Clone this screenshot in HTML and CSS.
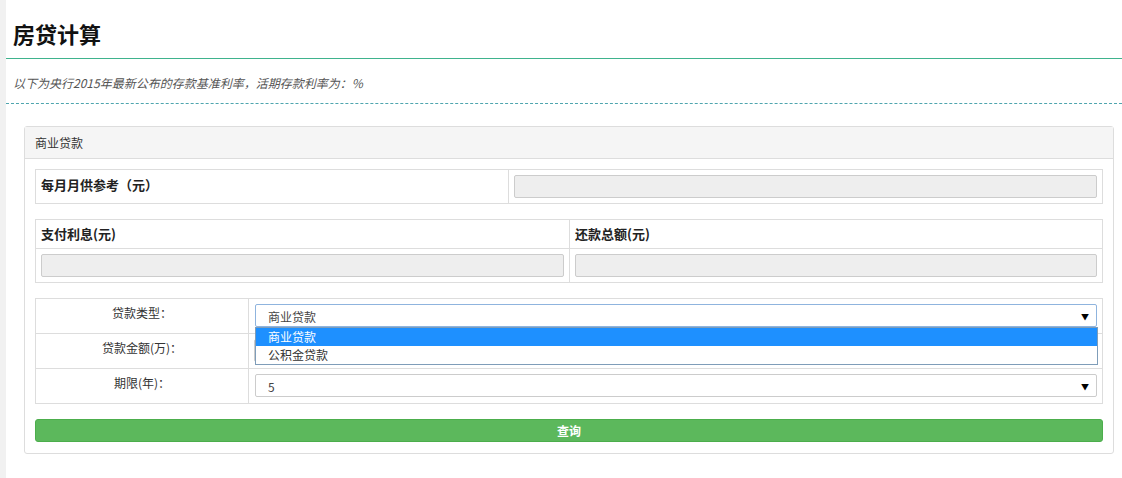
FILE: index.html
```html
<!DOCTYPE html>
<html lang="zh-CN">
<head>
<meta charset="utf-8">
<title>房贷计算</title>
<link rel="stylesheet" href="styles.css">
</head>
<body>
<div class="page">
  <h2 class="title">房贷计算</h2>
  <p class="note">以下为央行2015年最新公布的存款基准利率，活期存款利率为：%</p>
  <div class="panel">
    <div class="panel-head">商业贷款</div>
    <div class="panel-body">
      <div class="grid g1">
        <div class="cell th">每月月供参考（元）</div>
        <div class="cell bl"><div class="field ro"></div></div>
      </div>
      <div class="grid g2">
        <div class="cell th hd">支付利息(元)</div>
        <div class="cell th hd bl">还款总额(元)</div>
        <div class="cell"><div class="field ro"></div></div>
        <div class="cell bl"><div class="field ro"></div></div>
      </div>
      <div class="grid g3">
        <div class="cell lbl">贷款类型：</div>
        <div class="cell bl sel-cell">
          <div class="select focus"><span>商业贷款</span><span class="arrow">▼</span></div>
          <div class="dropdown">
            <div class="opt active">商业贷款</div>
            <div class="opt">公积金贷款</div>
          </div>
        </div>
        <div class="cell lbl bt">贷款金额(万)：</div>
        <div class="cell bl bt"><div class="field"></div></div>
        <div class="cell lbl bt">期限(年)：</div>
        <div class="cell bl bt"><div class="select"><span>5</span><span class="arrow">▼</span></div></div>
      </div>
      <div class="btn">查询</div>
    </div>
  </div>
</div>
</body>
</html>
```
FILE: styles.css
```css
html, body {
  margin: 0;
  padding: 0;
}
body {
  background: #f1f1f1;
  font-family: "Noto Sans CJK SC", "Noto Sans", sans-serif;
  font-size: 12px;
  color: #333;
}
.page {
  margin-left: 6px;
  background: #fff;
  min-height: 478px;
  overflow: hidden;
}
.title {
  margin: 0;
  padding: 18px 7px 10px;
  font-size: 22px;
  line-height: 30px;
  font-weight: bold;
  color: #111;
  border-bottom: 1px solid #3fb38d;
}
.note {
  margin: 14px 0 0;
  padding: 0 7px 10px;
  line-height: 20px;
  font-style: italic;
  color: #555;
  border-bottom: 1px dashed #4fa5ae;
}
.panel {
  margin: 22px 8px 0 18px;
  border: 1px solid #ddd;
  border-radius: 3px;
}
.panel-head {
  background: #f5f5f5;
  border-bottom: 1px solid #ddd;
  line-height: 31px;
  padding: 0 10px;
  color: #333;
}
.panel-body {
  padding: 10px 10px 11px;
}
.grid {
  display: grid;
  border: 1px solid #ddd;
  margin-bottom: 15px;
}
.g1 { grid-template-columns: 472px 1fr; }
.g2 { grid-template-columns: 1fr 1fr; }
.g3 { grid-template-columns: 212px 1fr; }
.cell {
  padding: 5px;
  line-height: 18px;
}
.bl { border-left: 1px solid #ddd; }
.bt { border-top: 1px solid #ddd; }
.th {
  font-weight: bold;
  font-size: 13px;
  color: #222;
  line-height: 20px;
}
.hd {
  line-height: 18px;
  border-bottom: 1px solid #ddd;
}
.field {
  height: 21px;
  border: 1px solid #ccc;
  border-radius: 2px;
  background: #fff;
}
.field.ro {
  background: #eee;
}
.lbl {
  text-align: center;
  padding-bottom: 11px;
}
.sel-cell {
  position: relative;
}
.select {
  margin-left: 1px;
  border: 1px solid #ccc;
  border-radius: 2px;
  display: flex;
  align-items: center;
  justify-content: space-between;
  padding: 2px 7px 0 12px;
  color: #444;
  line-height: 1;
  height: 19px;
}
.select.focus {
  border-color: #8fb4de;
}
.arrow {
  font-size: 8px;
  color: #000;
}
.dropdown {
  position: absolute;
  left: 6px;
  right: 4px;
  top: 28px;
  border: 1px solid #7f9db9;
  background: #fff;
  z-index: 2;
}
.opt {
  height: 18px;
  line-height: 18px;
  padding-left: 12px;
  color: #333;
}
.opt.active {
  background: #1e90ff;
  color: #fff;
}
.btn {
  background: #5cb85c;
  border: 1px solid #4cae4c;
  border-radius: 3px;
  color: #fff;
  text-align: center;
  line-height: 21px;
  font-weight: bold;
}
```
